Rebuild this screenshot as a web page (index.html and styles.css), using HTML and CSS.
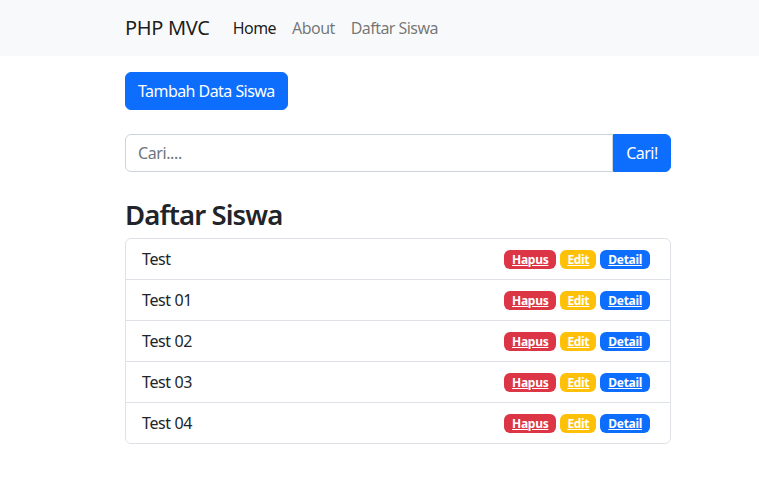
FILE: index.html
```html
<!DOCTYPE html>
<html lang="id">
<head>
<meta charset="utf-8">
<title>PHP MVC</title>
<link rel="stylesheet" href="styles.css">
</head>
<body>
<nav class="navbar">
  <div class="wrap nav-inner">
    <a class="brand" href="#">PHP MVC</a>
    <ul class="nav-links">
      <li><a class="active" href="#">Home</a></li>
      <li><a href="#">About</a></li>
      <li><a href="#">Daftar Siswa</a></li>
    </ul>
  </div>
</nav>
<main class="wrap main">
  <button class="btn btn-primary">Tambah Data Siswa</button>
  <form class="input-group">
    <input class="form-control" type="text" placeholder="Cari....">
    <button class="btn btn-primary btn-search" type="button">Cari!</button>
  </form>
  <h3 class="title">Daftar Siswa</h3>
  <ul class="list-group">
    <li class="list-item"><span>Test</span><span class="badges"><a class="badge red" href="#">Hapus</a><a class="badge yellow" href="#">Edit</a><a class="badge blue" href="#">Detail</a></span></li>
    <li class="list-item"><span>Test 01</span><span class="badges"><a class="badge red" href="#">Hapus</a><a class="badge yellow" href="#">Edit</a><a class="badge blue" href="#">Detail</a></span></li>
    <li class="list-item"><span>Test 02</span><span class="badges"><a class="badge red" href="#">Hapus</a><a class="badge yellow" href="#">Edit</a><a class="badge blue" href="#">Detail</a></span></li>
    <li class="list-item"><span>Test 03</span><span class="badges"><a class="badge red" href="#">Hapus</a><a class="badge yellow" href="#">Edit</a><a class="badge blue" href="#">Detail</a></span></li>
    <li class="list-item"><span>Test 04</span><span class="badges"><a class="badge red" href="#">Hapus</a><a class="badge yellow" href="#">Edit</a><a class="badge blue" href="#">Detail</a></span></li>
  </ul>
</main>
</body>
</html>
```
FILE: styles.css
```css
* { box-sizing: border-box; }
body {
  margin: 0;
  font-family: "Noto Sans", "Open Sans", sans-serif;
  font-size: 16px;
  line-height: 1.5;
  color: #212529;
  background: #fff;
}
.wrap {
  width: 546px;
  margin-left: 125px;
}
.navbar {
  background: #f8f9fa;
  height: 56px;
}
.nav-inner {
  display: flex;
  align-items: center;
  height: 56px;
}
.brand {
  font-size: 20px;
  color: rgba(0,0,0,.9);
  text-decoration: none;
  margin-right: 15px;
  letter-spacing: -0.3px;
}
.nav-links {
  display: flex;
  list-style: none;
  margin: 0;
  padding: 0;
}
.nav-links a {
  display: block;
  padding: 8px 8px;
  text-decoration: none;
  color: rgba(0,0,0,.55);
  letter-spacing: -0.55px;
}
.nav-links a.active { color: rgba(0,0,0,.9); }
.main { padding-top: 16px; }
.btn {
  font-family: inherit;
  font-size: 16px;
  line-height: 24px;
  border: 1px solid #0d6efd;
  border-radius: 6px;
  padding: 6px 12px;
  cursor: pointer;
  letter-spacing: -0.55px;
}
.btn-primary { background: #0d6efd; color: #fff; }
.input-group {
  display: flex;
  margin-top: 24px;
}
.form-control {
  flex: 1;
  font-family: inherit;
  font-size: 16px;
  line-height: 24px;
  padding: 6px 12px;
  border: 1px solid #ced4da;
  border-radius: 6px 0 0 6px;
  color: #212529;
  outline: none;
  letter-spacing: -0.4px;
}
.form-control::placeholder { color: #6c757d; }
.btn-search {
  border-radius: 0 6px 6px 0;
  width: 58px;
  padding: 6px 0;
}
.title {
  font-size: 27.5px;
  font-weight: 600;
  line-height: 33px;
  margin: 26px 0 7px;
  letter-spacing: -0.9px;
}
.list-group {
  list-style: none;
  margin: 0;
  padding: 0;
  border: 1px solid #dee2e6;
  border-radius: 6px;
}
.list-item {
  display: flex;
  justify-content: space-between;
  align-items: center;
  padding: 8px 16px;
  height: 41px;
  border-top: 1px solid #dee2e6;
  letter-spacing: -0.4px;
}
.list-item:first-child { border-top: 0; height: 40px; }
.badges {
  display: flex;
  gap: 4px;
  margin-right: 4px;
}
.badge {
  display: inline-block;
  font-size: 12px;
  font-weight: 700;
  line-height: 1;
  padding: 4px 8px 3px;
  border-radius: 6px;
  color: #fff;
  text-decoration: underline;
  letter-spacing: -0.3px;
}
.yellow { padding-left: 7px; padding-right: 7px; }
.red { background: #dc3545; }
.yellow { background: #ffc107; }
.blue { background: #0d6efd; }
```
